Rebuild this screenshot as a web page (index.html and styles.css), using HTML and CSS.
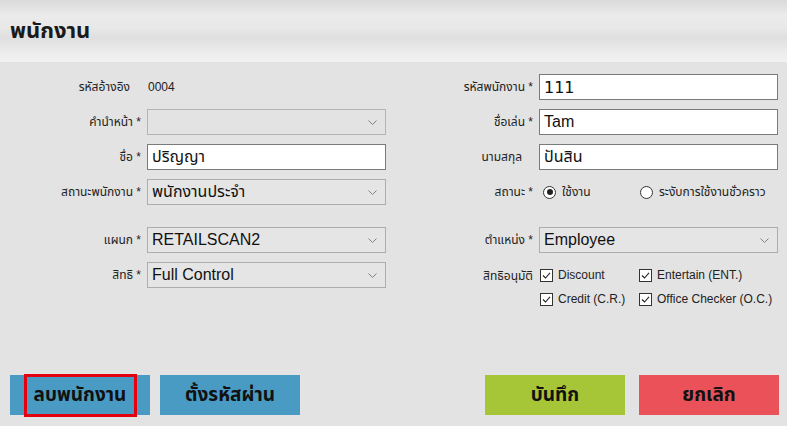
FILE: index.html
```html
<!DOCTYPE html>
<html lang="th">
<head>
<meta charset="utf-8">
<title>พนักงาน</title>
<link rel="stylesheet" href="styles.css">
</head>
<body>
<header class="topbar"><h1 class="title">พนักงาน</h1></header>
<main class="form">
  <div class="lbl noast">รหัสอ้างอิง</div>
  <div class="static">0004</div>
  <div class="lbl">รหัสพนักงาน *</div>
  <div class="field input"><span class="val latin-b">111</span></div>

  <div class="lbl">คำนำหน้า *</div>
  <div class="field select disabled"><span class="val"></span><svg class="chev" viewBox="0 0 9 5" width="9" height="5"><path d="M0.5 0.5 L4.5 4.5 L8.5 0.5" fill="none" stroke="#808080" stroke-width="1"/></svg></div>
  <div class="lbl">ชื่อเล่น *</div>
  <div class="field input"><span class="val">Tam</span></div>

  <div class="lbl">ชื่อ *</div>
  <div class="field input"><span class="val">ปริญญา</span></div>
  <div class="lbl noast">นามสกุล</div>
  <div class="field input"><span class="val">ปันสิน</span></div>

  <div class="lbl">สถานะพนักงาน *</div>
  <div class="field select"><span class="val">พนักงานประจำ</span><svg class="chev" viewBox="0 0 9 5" width="9" height="5"><path d="M0.5 0.5 L4.5 4.5 L8.5 0.5" fill="none" stroke="#808080" stroke-width="1"/></svg></div>
  <div class="lbl">สถานะ *</div>
  <div class="radios">
    <span class="opt"><span class="radio on"></span>ใช้งาน</span>
    <span class="opt"><span class="radio"></span>ระงับการใช้งานชั่วคราว</span>
  </div>

  <div class="spacer"></div>

  <div class="lbl">แผนก *</div>
  <div class="field select"><span class="val">RETAILSCAN2</span><svg class="chev" viewBox="0 0 9 5" width="9" height="5"><path d="M0.5 0.5 L4.5 4.5 L8.5 0.5" fill="none" stroke="#808080" stroke-width="1"/></svg></div>
  <div class="lbl">ตำแหน่ง *</div>
  <div class="field select"><span class="val">Employee</span><svg class="chev" viewBox="0 0 9 5" width="9" height="5"><path d="M0.5 0.5 L4.5 4.5 L8.5 0.5" fill="none" stroke="#808080" stroke-width="1"/></svg></div>

  <div class="lbl">สิทธิ *</div>
  <div class="field select"><span class="val">Full Control</span><svg class="chev" viewBox="0 0 9 5" width="9" height="5"><path d="M0.5 0.5 L4.5 4.5 L8.5 0.5" fill="none" stroke="#808080" stroke-width="1"/></svg></div>
  <div class="lbl top">สิทธิอนุมัติ</div>
  <div class="checks">
    <span class="opt"><span class="cb"><svg viewBox="0 0 13 13" width="13" height="13"><path d="M3 6.5 L5.5 9 L10 3.8" fill="none" stroke="#222" stroke-width="1.1"/></svg></span>Discount</span>
    <span class="opt"><span class="cb"><svg viewBox="0 0 13 13" width="13" height="13"><path d="M3 6.5 L5.5 9 L10 3.8" fill="none" stroke="#222" stroke-width="1.1"/></svg></span>Entertain (ENT.)</span>
    <span class="opt"><span class="cb"><svg viewBox="0 0 13 13" width="13" height="13"><path d="M3 6.5 L5.5 9 L10 3.8" fill="none" stroke="#222" stroke-width="1.1"/></svg></span>Credit (C.R.)</span>
    <span class="opt"><span class="cb"><svg viewBox="0 0 13 13" width="13" height="13"><path d="M3 6.5 L5.5 9 L10 3.8" fill="none" stroke="#222" stroke-width="1.1"/></svg></span>Office Checker (O.C.)</span>
  </div>
</main>
<footer class="actions">
  <div class="group left">
    <button class="btn blue highlighted">ลบพนักงาน<span class="mark"></span></button>
    <button class="btn blue">ตั้งรหัสผ่าน</button>
  </div>
  <div class="group right">
    <button class="btn green">บันทึก</button>
    <button class="btn red">ยกเลิก</button>
  </div>
</footer>
</body>
</html>
```

FILE: styles.css
```css
html, body {
  margin: 0;
  padding: 0;
}
body {
  width: 787px;
  height: 426px;
  overflow: hidden;
  background: #e3e3e3;
  font-family: "Liberation Sans", "Noto Sans Thai", "Noto Sans", sans-serif;
  color: #1a1a1a;
}
.topbar {
  height: 62px;
  display: flex;
  align-items: center;
  padding-left: 10px;
  background: linear-gradient(to bottom, #dadada 0%, #ebebeb 25%, #e8e8e8 45%, #dfdfdf 60%, #ececec 85%, #f1f1f1 100%);
}
.title {
  margin: 0;
  font-size: 22px;
  font-weight: bold;
  color: #1a1a1a;
}
.form {
  margin-top: 12px;
  display: grid;
  grid-template-columns: 141px 239px 141px 239px;
  grid-template-rows: 26px 26px 26px 26px 4px 26px 26px;
  column-gap: 6px;
  row-gap: 9px;
}
.spacer {
  grid-column: 1 / -1;
}
.lbl {
  display: flex;
  align-items: center;
  justify-content: flex-end;
  font-size: 12px;
  color: #222;
  white-space: nowrap;
}
.lbl.noast {
  padding-right: 11px;
}
.lbl.top {
  align-items: flex-start;
  padding-top: 5px;
}
.static {
  display: flex;
  align-items: center;
  padding-left: 1px;
  font-size: 12px;
  color: #222;
}
.field {
  box-sizing: border-box;
  display: flex;
  align-items: center;
  justify-content: space-between;
  padding: 0 8px 0 4px;
  font-size: 16px;
  color: #111;
  white-space: nowrap;
}
.input {
  background: #fff;
  border: 1px solid #7a7a7a;
}
.select {
  background: #e5e5e5;
  border: 1px solid #adadad;
}
.select.disabled {
  background: #e3e3e3;
  border-color: #b4b4b4;
}
.latin-b {
  font-family: "DejaVu Sans", sans-serif;
  font-size: 16px;
}
.chev {
  flex: none;
}
.radios {
  display: flex;
  align-items: center;
  font-size: 12px;
  color: #222;
  padding-left: 4px;
}
.opt {
  display: inline-flex;
  align-items: center;
  white-space: nowrap;
}
.radios .opt:first-child {
  width: 97px;
}
.radio {
  box-sizing: border-box;
  width: 13px;
  height: 13px;
  border: 1px solid #333;
  border-radius: 50%;
  background: #fff;
  margin-right: 6px;
  position: relative;
}
.radio.on::after {
  content: "";
  position: absolute;
  left: 2.5px;
  top: 2.5px;
  width: 6px;
  height: 6px;
  border-radius: 50%;
  background: #222;
}
.checks {
  align-self: start;
  display: grid;
  grid-template-columns: 99px auto;
  grid-auto-rows: 24px;
  padding-left: 1px;
  margin-top: 1px;
  font-size: 12px;
  color: #222;
}
.cb {
  box-sizing: border-box;
  width: 13px;
  height: 13px;
  border: 1px solid #333;
  background: #fff;
  margin-right: 5px;
  display: inline-flex;
}
.cb svg {
  display: block;
  margin: -1px;
}
.actions {
  margin-top: 87px;
  display: flex;
  justify-content: space-between;
  padding: 0 8px 0 10px;
}
.group {
  display: flex;
}
.group.left {
  gap: 10px;
}
.group.right {
  gap: 14px;
}
.btn {
  width: 140px;
  height: 40px;
  border: none;
  padding: 0;
  margin: 0;
  font-family: "Liberation Sans", "Noto Sans Thai", "Noto Sans", sans-serif;
  font-size: 19px;
  font-weight: bold;
  color: #111;
  position: relative;
}
.blue { background: #4a9bc4; }
.green { background: #a7c637; }
.red { background: #ea5158; }
.mark {
  position: absolute;
  left: 14px;
  top: -1px;
  width: 113px;
  height: 43px;
  box-sizing: border-box;
  border: 3px solid #e4000e;
}
```
